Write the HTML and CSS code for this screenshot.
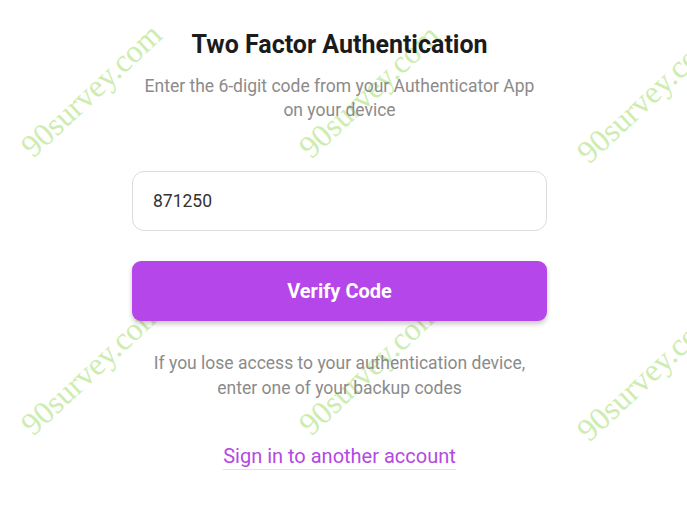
FILE: index.html
```html
<!DOCTYPE html>
<html lang="en">
<head>
<meta charset="utf-8">
<title>Two Factor Authentication</title>
<link rel="stylesheet" href="styles.css">
</head>
<body>
<div class="page">
  <div class="watermarks" aria-hidden="true">
    <span class="wm wm-a1">90survey.com</span>
    <span class="wm wm-a2">90survey.com</span>
    <span class="wm wm-a3">90survey.com</span>
    <span class="wm wm-b1">90survey.com</span>
    <span class="wm wm-b2">90survey.com</span>
    <span class="wm wm-b3">90survey.com</span>
  </div>
  <main class="card">
    <h1 class="title">Two Factor Authentication</h1>
    <p class="subtitle">Enter the 6-digit code from your Authenticator App on your device</p>
    <input class="code-input" type="text" value="871250">
    <button class="verify-btn" type="button">Verify Code</button>
    <p class="hint">If you lose access to your authentication device, enter one of your backup codes</p>
    <a class="switch-link" href="#">Sign in to another account</a>
  </main>
</div>
</body>
</html>
```
FILE: styles.css
```css
* { box-sizing: border-box; }
html, body {
  margin: 0;
  padding: 0;
  background: #ffffff;
}
body {
  font-family: Roboto, "Noto Sans", Arial, sans-serif;
  width: 687px;
  height: 505px;
  overflow: hidden;
}
.page {
  position: relative;
  height: 505px;
  padding-right: 8px;
}
.watermarks {
  position: absolute;
  inset: 0;
  z-index: 0;
  pointer-events: none;
}
.wm {
  position: absolute;
  width: 200px;
  margin-left: -100px;
  margin-top: -20px;
  text-align: center;
  font-family: "Liberation Serif", "Times New Roman", serif;
  font-size: 32px;
  line-height: 40px;
  color: #cdedb0;
  transform: rotate(-43deg);
  white-space: nowrap;
}
.wm-a1 { left: 91px; top: 90px; }
.wm-a2 { left: 369px; top: 91px; }
.wm-a3 { left: 647px; top: 96px; }
.wm-b1 { left: 91px; top: 368px; }
.wm-b2 { left: 369px; top: 368px; }
.wm-b3 { left: 647px; top: 374px; }

.card {
  position: relative;
  z-index: 1;
  width: 415px;
  margin: 0 auto;
  padding-top: 31px;
  display: flex;
  flex-direction: column;
  align-items: stretch;
  text-align: center;
}
.title {
  margin: 0;
  font-size: 25px;
  line-height: 28px;
  font-weight: 700;
  color: #1b1b1b;
}
.subtitle {
  margin: 15px 0 0;
  padding: 0 10px;
  font-size: 17.5px;
  line-height: 24px;
  color: #8b8b8b;
}
.code-input {
  margin-top: 49px;
  height: 60px;
  width: 100%;
  border: 1px solid #dcdcdc;
  border-radius: 12px;
  padding: 0 20px;
  font-family: Roboto, "Noto Sans", Arial, sans-serif;
  font-size: 17.5px;
  color: #333333;
  background: #ffffff;
  outline: none;
}
.verify-btn {
  margin-top: 30px;
  height: 60px;
  width: 100%;
  border: none;
  border-radius: 9px;
  background: #b546e9;
  color: #ffffff;
  font-family: Roboto, "Noto Sans", Arial, sans-serif;
  font-size: 20px;
  font-weight: 700;
  box-shadow: 0 3px 5px rgba(0, 0, 0, 0.22);
  cursor: pointer;
}
.hint {
  margin: 30px 0 0;
  font-size: 17.5px;
  line-height: 25px;
  color: #8b8b8b;
}
.switch-link {
  align-self: center;
  margin-top: 43px;
  font-size: 20px;
  line-height: 24px;
  padding-bottom: 1px;
  color: #b548e2;
  text-decoration: none;
  border-bottom: 1px solid #e6e0ec;
}
```
